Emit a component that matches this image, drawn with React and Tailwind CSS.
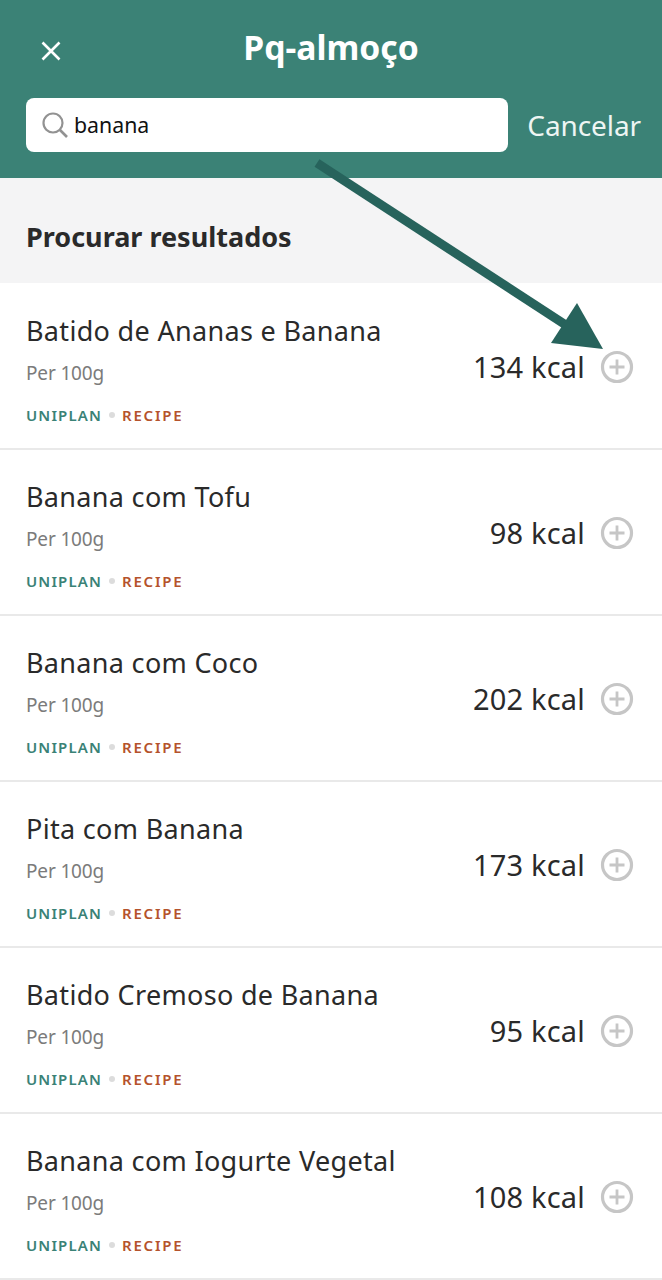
import React from 'react';

const foods = [
  { name: 'Batido de Ananas e Banana', kcal: 134 },
  { name: 'Banana com Tofu', kcal: 98 },
  { name: 'Banana com Coco', kcal: 202 },
  { name: 'Pita com Banana', kcal: 173 },
  { name: 'Batido Cremoso de Banana', kcal: 95 },
  { name: 'Banana com Iogurte Vegetal', kcal: 108 },
];

const PlusIcon = () => (
  <svg width="34" height="34" viewBox="0 0 34 34" fill="none" stroke="#c6c6c6" strokeWidth="3.2">
    <circle cx="17" cy="17" r="14.5" />
    <path d="M17 9.5v15M9.5 17h15" strokeWidth="2.8" />
  </svg>
);

const FoodRow = ({ name, kcal }) => (
  <div className="flex h-[166px] items-center justify-between border-b-2 border-[#e9e9e9] bg-white pl-[26px] pr-[28px]">
    <div className="flex flex-col pt-[8px]">
      <div className="text-[27px] leading-[32px] tracking-[0.32px] text-[#2a2a2a]">{name}</div>
      <div className="mt-[14px] text-[19px] leading-[24px] tracking-[-0.15px] text-[#7b7b7b]">Per 100g</div>
      <div className="mt-[20px] flex items-center text-[15px] font-semibold leading-[20px]">
        <span className="tracking-[1.15px] text-[#3a8276]">UNIPLAN</span>
        <span className="mx-[7px] h-[6px] w-[6px] rounded-full bg-[#dcdcdc]" />
        <span className="tracking-[1.75px] text-[#b5532c]">RECIPE</span>
      </div>
    </div>
    <div className="flex items-center gap-[15px] pt-[2px]">
      <span className="text-[29px] leading-[34px] tracking-[0.2px] text-[#2a2a2a]">{kcal} kcal</span>
      <PlusIcon />
    </div>
  </div>
);

export default function App() {
  return (
    <div className="relative h-[1280px] w-[662px] overflow-hidden bg-white font-['Noto_Sans','Open_Sans',sans-serif]">
      <header className="h-[178px] bg-[#3b8276] pl-[26px] pr-[21px]">
        <div className="relative flex h-[98px] items-center justify-center pb-[4px] pr-[5px]">
          <svg className="absolute left-[15px] top-[41px]" width="20" height="20" viewBox="0 0 20 20" stroke="#fff" strokeWidth="2.6" fill="none">
            <path d="M1.5 1.5l17 17M18.5 1.5l-17 17" />
          </svg>
          <h1 className="text-[33.7px] font-bold leading-[40px] text-white">Pq-almoço</h1>
        </div>
        <div className="flex items-center justify-between">
          <div className="flex h-[54px] w-[482px] items-center gap-[5px] rounded-[8px] bg-white pl-[15px]">
            <svg width="28" height="28" viewBox="0 0 28 28" fill="none" stroke="#929292" strokeWidth="2.2">
              <circle cx="12" cy="12" r="9.5" />
              <path d="M19 19l7 7" strokeWidth="2.6" />
            </svg>
            <span className="text-[21.3px] leading-[28px] text-[#111]">banana</span>
          </div>
          <span className="text-[28px] leading-[34px] tracking-[-0.1px] text-[#eef5f3]">Cancelar</span>
        </div>
      </header>
      <div className="flex h-[105px] items-center bg-[#f4f4f5] pl-[26px] pt-[12px]">
        <h2 className="text-[27px] font-bold leading-[34px] text-[#2a2a2a]">Procurar resultados</h2>
      </div>
      <div className="pt-[1px]">
        {foods.map((food) => (
          <FoodRow key={food.name} {...food} />
        ))}
      </div>
      {/* annotation arrow over the screenshot */}
      <svg className="absolute left-0 top-0" width="662" height="400" viewBox="0 0 662 400" fill="none">
        <path d="M317 163L575 331" stroke="#27635c" strokeWidth="9" />
        <path d="M577 303L603 349L551 343Z" fill="#27635c" />
      </svg>
    </div>
  );
}
